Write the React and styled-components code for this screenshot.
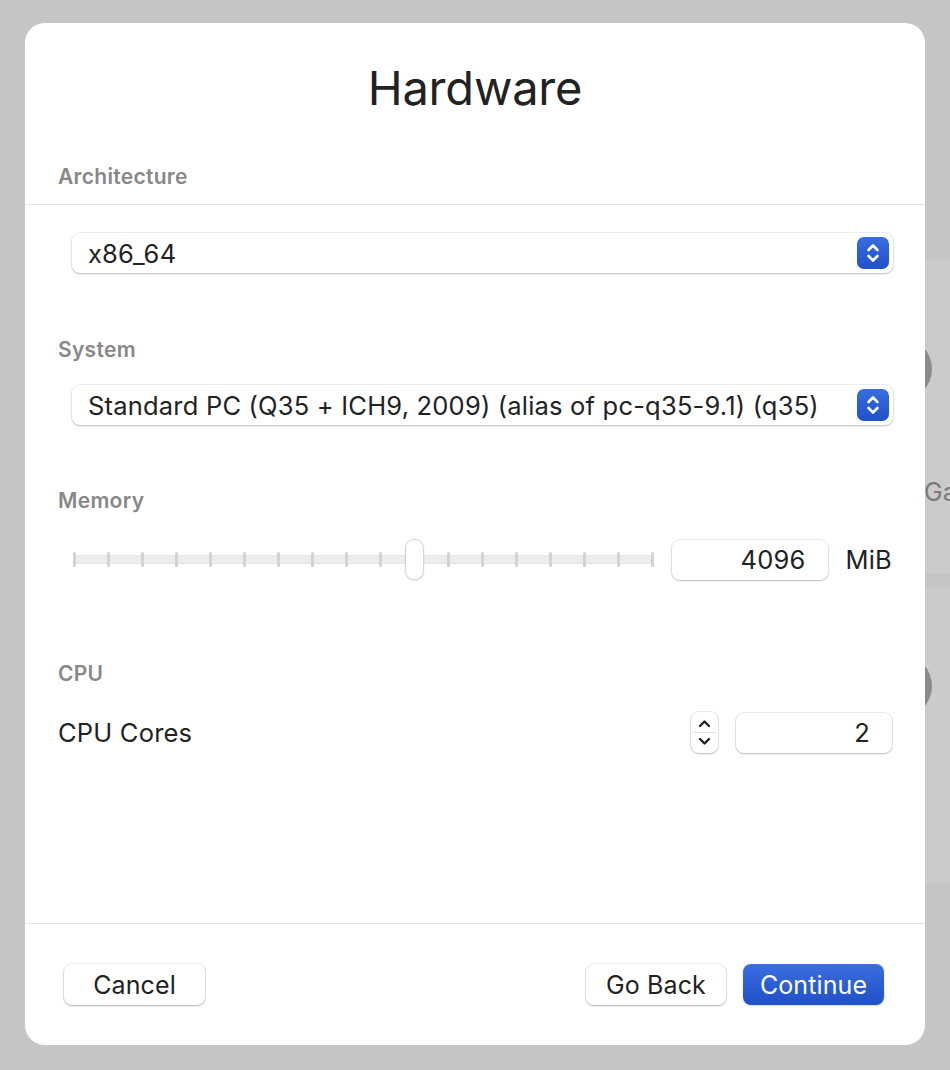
import React from 'react'
import styled, { createGlobalStyle } from 'styled-components'

const GlobalStyle = createGlobalStyle`
  html, body {
    margin: 0;
    padding: 0;
    background: #c6c6c6;
  }
  body {
    font-family: Inter, "Noto Sans", "Liberation Sans", sans-serif;
    color: #242424;
    -webkit-font-smoothing: antialiased;
  }
`

const Backdrop = styled.div`
  position: relative;
  width: 950px;
  height: 1070px;
  overflow: hidden;
  background: #c6c6c6;
  display: flex;
  align-items: flex-start;
`

// pieces of the window behind the sheet, peeking out on the right
const BehindBand = styled.div`
  position: absolute;
  left: 880px;
  right: 0;
  top: ${p => p.top}px;
  height: ${p => p.height}px;
  background: #cbcbcb;
`

const BehindCircle = styled.div`
  position: absolute;
  left: 872px;
  top: ${p => p.top}px;
  width: 60px;
  height: 62px;
  border-radius: 50%;
  background: #8b8b8b;
`

const BehindText = styled.div`
  position: absolute;
  left: ${p => p.left}px;
  top: ${p => p.top}px;
  font-size: 25px;
  color: #7a7a7a;
  line-height: 28px;
  white-space: nowrap;
`

const Sheet = styled.div`
  position: relative;
  z-index: 1;
  margin: 23px 0 0 25px;
  width: 900px;
  height: 1022px;
  background: #fff;
  border-radius: 20px;
  display: flex;
  flex-direction: column;
  overflow: hidden;
`

const Title = styled.h1`
  margin: 0;
  padding-top: 37px;
  font-size: 47px;
  line-height: 56px;
  font-weight: 400;
  text-align: center;
  color: #222;
  letter-spacing: -0.2px;
`

const SectionHead = styled.div`
  padding: 48px 33px 14px;
  border-bottom: 1px solid #e4e4e4;
`

const Label = styled.div`
  font-size: 21px;
  line-height: 26px;
  font-weight: 600;
  color: #888;
  letter-spacing: 0.3px;
  margin-top: ${p => p.$top || 0}px;
  padding-left: 33px;
`

const HeadLabel = styled(Label)`
  padding-left: 0;
`

const Body = styled.div`
  flex: 1;
  display: flex;
  flex-direction: column;
`

const SelectBox = styled.div`
  margin: ${p => p.$top}px 32px 0 47px;
  height: 40px;
  box-sizing: border-box;
  border-radius: 8px;
  background: #fff;
  box-shadow: 0 0 0 1px rgba(0, 0, 0, 0.06), 0 1px 2px rgba(0, 0, 0, 0.22);
  display: flex;
  align-items: center;
  padding: 0 4px 0 16px;
  font-size: 25.5px;
  letter-spacing: 0.2px;
  color: #222;
`

const SelectText = styled.span`
  flex: 1;
  white-space: nowrap;
`

const BlueArrows = styled.div`
  width: 32px;
  height: 32px;
  border-radius: 7px;
  background: linear-gradient(#3a6de0, #1f51c8);
  display: flex;
  align-items: center;
  justify-content: center;
`

const Row = styled.div`
  display: flex;
  align-items: center;
  margin: ${p => p.$top}px 33px 0 ${p => p.$left || 33}px;
  height: 41px;
`

const Slider = styled.div`
  position: relative;
  width: 582px;
  height: 41px;
  display: flex;
  align-items: center;
`

const Track = styled.div`
  position: absolute;
  left: 2px;
  right: 2px;
  top: 16px;
  height: 9px;
  border-radius: 4px;
  background: #ededed;
  box-shadow: inset 0 0 0 1px #e6e6e6;
`

const Ticks = styled.div`
  position: relative;
  flex: 1;
  display: flex;
  justify-content: space-between;
  align-items: center;
`

const Tick = styled.span`
  width: 3px;
  height: 15px;
  border-radius: 1.5px;
  background: #d3d3d3;
`

const Knob = styled.div`
  position: absolute;
  top: 0;
  width: 17px;
  height: 39px;
  border-radius: 9px;
  background: #fff;
  border: 1px solid #d6d6d6;
  box-shadow: 0 1px 2px rgba(0, 0, 0, 0.12);
`

const NumberField = styled.div`
  width: 156px;
  height: 40px;
  box-sizing: border-box;
  margin-left: ${p => p.$gap}px;
  border-radius: 8px;
  background: #fff;
  box-shadow: 0 0 0 1px rgba(0, 0, 0, 0.08), 0 1px 2px rgba(0, 0, 0, 0.2);
  display: flex;
  align-items: center;
  justify-content: flex-end;
  padding-right: 22px;
  font-size: 25.5px;
  letter-spacing: 0.2px;
  color: #222;
`

const Unit = styled.span`
  margin-left: 18px;
  font-size: 25.5px;
  letter-spacing: 0.2px;
  color: #222;
`

const RowText = styled.span`
  flex: 1;
  font-size: 25.5px;
  letter-spacing: 0.2px;
  color: #222;
`

const Stepper = styled.div`
  width: 27px;
  height: 41px;
  box-sizing: border-box;
  border-radius: 8px;
  background: #fff;
  box-shadow: 0 0 0 1px rgba(0, 0, 0, 0.08), 0 1px 2px rgba(0, 0, 0, 0.2);
  display: flex;
  align-items: center;
  justify-content: center;
`

const Footer = styled.div`
  border-top: 1px solid #e4e4e4;
  padding: 40px 41px 40px 39px;
  display: flex;
  align-items: center;
  gap: 17px;
`

const Button = styled.button`
  width: ${p => p.$w || 141}px;
  height: 41px;
  border: none;
  border-radius: 8px;
  font-family: inherit;
  font-size: 25px;
  letter-spacing: 0.1px;
  padding: 0;
  color: ${p => (p.$primary ? '#fff' : '#222')};
  background: ${p => (p.$primary ? 'linear-gradient(#3b6ee0, #1f50c7)' : '#fff')};
  box-shadow: ${p =>
    p.$primary
      ? '0 1px 2px rgba(0, 0, 0, 0.18)'
      : '0 0 0 1px rgba(0, 0, 0, 0.07), 0 1px 2px rgba(0, 0, 0, 0.25)'};
`

const Spacer = styled.div`
  flex: 1;
`

function SelectArrows() {
  return (
    <BlueArrows>
      <svg width="32" height="32" viewBox="0 0 32 32" fill="none" stroke="#fff" strokeWidth="2.6" strokeLinecap="round" strokeLinejoin="round">
        <path d="M11.5 13 L16 8.5 L20.5 13" />
        <path d="M11.5 19 L16 23.5 L20.5 19" />
      </svg>
    </BlueArrows>
  )
}

function StepArrows() {
  return (
    <Stepper>
      <svg width="27" height="41" viewBox="0 0 27 41" fill="none" stroke="#222" strokeWidth="2.4" strokeLinecap="round" strokeLinejoin="round">
        <path d="M9 14 L13.5 9.5 L18 14" />
        <line x1="3" y1="20.5" x2="24" y2="20.5" stroke="#e2e2e2" strokeWidth="1" />
        <path d="M9 27 L13.5 31.5 L18 27" />
      </svg>
    </Stepper>
  )
}

const TICKS = 18
const KNOB_AT = 10

function MemorySlider() {
  const step = (582 - 4 - 3) / (TICKS - 1)
  return (
    <Slider>
      <Track />
      <Ticks>
        {Array.from({ length: TICKS }, (_, i) => <Tick key={i} />)}
      </Ticks>
      <Knob style={{ left: 2 + KNOB_AT * step - 8 }} />
    </Slider>
  )
}

export default function App() {
  return (
    <>
      <GlobalStyle />
      <Backdrop>
        <BehindBand top={260} height={313} />
        <BehindBand top={588} height={295} />
        <BehindCircle top={338} />
        <BehindText left={924} top={478}>Ga</BehindText>
        <BehindCircle top={655} />
        <BehindText left={916} top={794}>t</BehindText>

        <Sheet>
          <Title>Hardware</Title>
          <SectionHead>
            <HeadLabel>Architecture</HeadLabel>
          </SectionHead>
          <Body>
            <SelectBox $top={28}>
              <SelectText>x86_64</SelectText>
              <SelectArrows />
            </SelectBox>

            <Label $top={64}>System</Label>
            <SelectBox $top={22}>
              <SelectText>Standard PC (Q35 + ICH9, 2009) (alias of pc-q35-9.1) (q35)</SelectText>
              <SelectArrows />
            </SelectBox>

            <Label $top={63}>Memory</Label>
            <Row $top={25} $left={48}>
              <MemorySlider />
              <NumberField $gap={18}>4096</NumberField>
              <Unit>MiB</Unit>
            </Row>

            <Label $top={81}>CPU</Label>
            <Row $top={25}>
              <RowText>CPU Cores</RowText>
              <StepArrows />
              <NumberField $gap={18}>2</NumberField>
            </Row>
            <Spacer />
          </Body>
          <Footer>
            <Button>Cancel</Button>
            <Spacer />
            <Button $w={140}>Go Back</Button>
            <Button $primary>Continue</Button>
          </Footer>
        </Sheet>
      </Backdrop>
    </>
  )
}
